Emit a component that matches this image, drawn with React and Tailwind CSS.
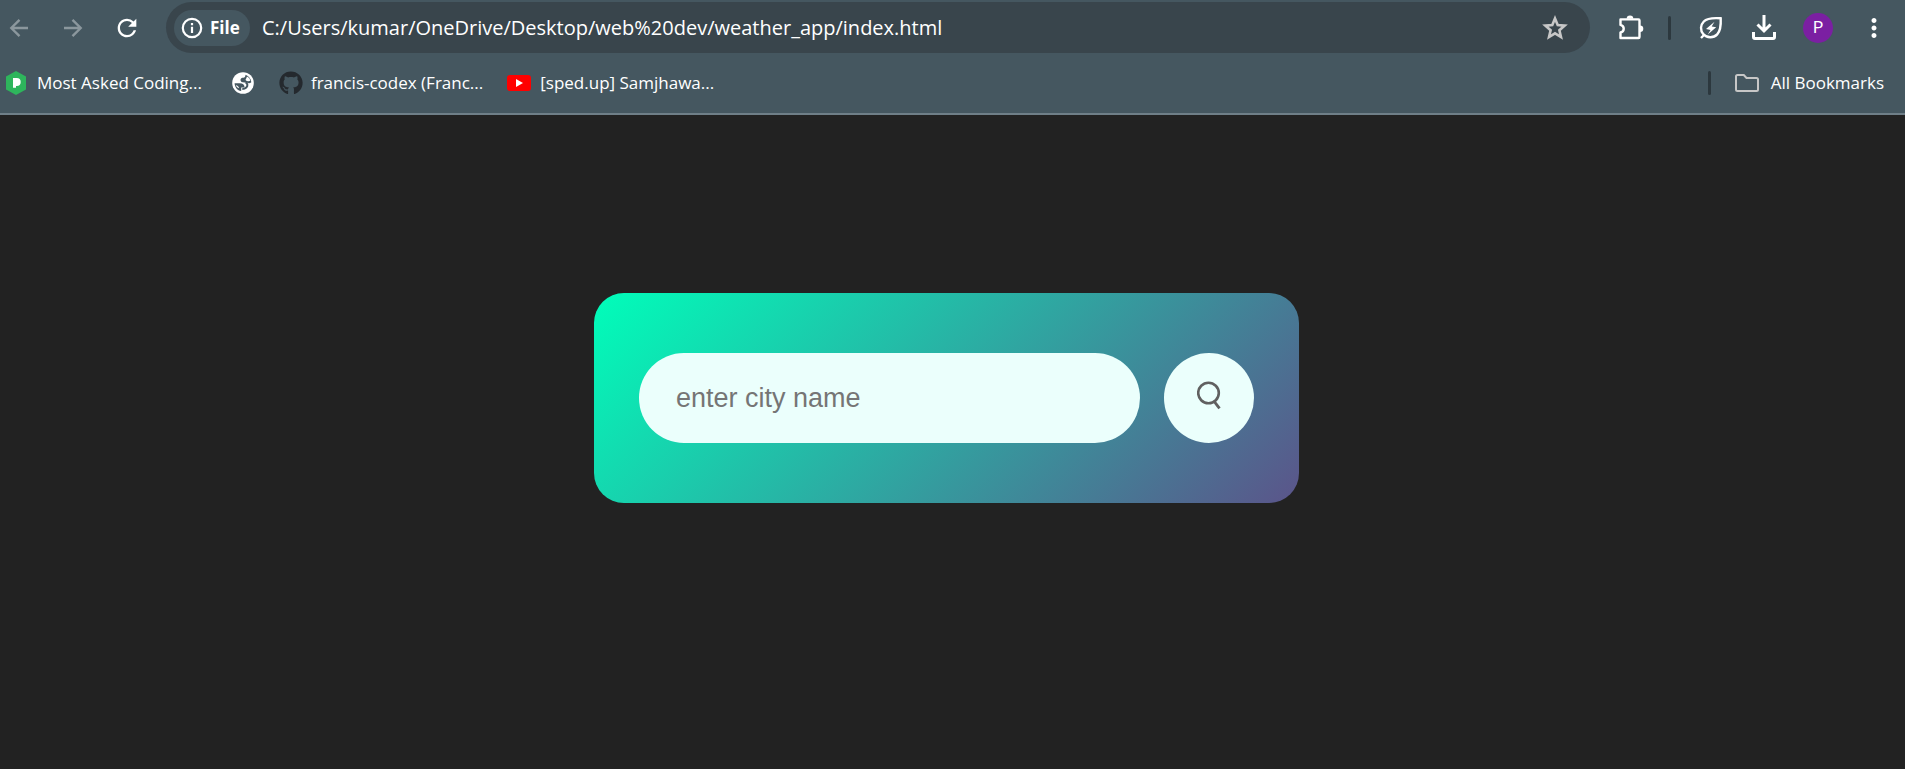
import React from "react";
import { FaGithub } from "react-icons/fa";
import { MdMoreVert, MdRefresh } from "react-icons/md";

function BackIcon({ className = "" }) {
  return (
    <svg className={className} width="20" height="20" viewBox="0 0 20 20" fill="none" stroke="currentColor" strokeWidth="2.400" aria-hidden="true">
      <path d="M19 10H3M10.500 1.800 2.300 10l8.200 8.200" />
    </svg>
  );
}

function InfoIcon() {
  return (
    <svg width="22" height="22" viewBox="0 0 22 22" fill="none" stroke="currentColor" strokeWidth="2.200" aria-hidden="true">
      <circle cx="11" cy="11" r="9.200" />
      <path d="M11 9.800V16M11 6v2.200" />
    </svg>
  );
}

function StarIcon() {
  return (
    <svg width="30" height="30" viewBox="0 0 30 30" fill="none" stroke="currentColor" strokeWidth="2.600" aria-hidden="true">
      <path d="m15 5.500 2.700 6.500 7 .6-5.300 4.600 1.600 6.900-6-3.700-6 3.700 1.600-6.900-5.300-4.600 7-.6z" />
    </svg>
  );
}

function PuzzleIcon() {
  return (
    <svg width="26" height="26" viewBox="0 0 26 26" fill="none" aria-hidden="true">
      <path
        d="M2.500 4.400H20.500a1 1 0 0 1 1 1V22a1 1 0 0 1-1 1H2.500V17.500c4.300-1 4.300-6.600 0-7.600z"
        stroke="currentColor"
        strokeWidth="2.400"
        strokeLinejoin="round"
      />
      <path d="M8.700 3.800a3.300 3.300 0 0 1 6.600 0zM22 10.400a3.300 3.300 0 0 1 0 6.600z" fill="currentColor" />
    </svg>
  );
}

function LeafIcon() {
  return (
    <svg width="24" height="24" viewBox="0 0 24 24" fill="none" stroke="currentColor" aria-hidden="true">
      <path d="M21.700 2.300C14 1.700 8 2.200 4.800 5.500c-3.600 3.600-3.600 9-.6 12.500 3.600 4.200 10.300 4.300 14 .4 3.300-3.500 3.900-8.400 3.500-16.100zM5.500 18.500 2 22" strokeWidth="2.400" />
      <path d="M15.500 5.800 7 13l4.500.9-2.800 4.600 8.500-7.200-4.500-.9z" fill="currentColor" stroke="none" />
    </svg>
  );
}

function DownloadIcon() {
  return (
    <svg width="26" height="26" viewBox="0 0 26 26" fill="none" stroke="currentColor" strokeWidth="3" aria-hidden="true">
      <path d="M13 0v15M6.500 9.500 13 16l6.500-6.500M2.500 17V22a1.500 1.500 0 0 0 1.500 1.500h18a1.500 1.500 0 0 0 1.500-1.500v-5" />
    </svg>
  );
}

function HexIcon() {
  return (
    <svg width="20" height="24" viewBox="0 0 20 24" aria-hidden="true">
      <path d="M10 0 20 5.500v13L10 24 0 18.500v-13z" fill="#2eb55c" />
      <path d="M7 7h3.700a4 4 0 0 1 0 8H10v1.700H7z" fill="#fff" />
    </svg>
  );
}

function GlobeIcon() {
  return (
    <svg width="22" height="22" viewBox="0 0 22 22" aria-hidden="true">
      <circle cx="11" cy="11" r="10.800" fill="#fff" />
      <path
        d="M13.500 2.800C17 4 19 7 19.300 10.200c-1 1-2.300 1.300-3.300.8-1.200-.6-2-.5-3.500-.5-2.500 0-4-.8-4-2.500s1.300-2.300 2.800-2.300c1.400 0 2.200-.9 2.200-2.900z"
        fill="#455760"
      />
      <path d="M2.600 11.200h5c3.200 0 5 1.500 5 4.200H9.200v3.700C5.400 18.400 2.700 15.300 2.600 11.200z" fill="#455760" />
      <path d="M15 4.500c1.800 1 3 2.500 3.300 4.300-2 .8-3.600.4-4.800-.8z" fill="#fff" />
      <path d="M3.800 13.300c1.700.3 3 1.300 3.200 3-1.600-.5-2.700-1.600-3.200-3z" fill="#fff" />
      <path d="M13.500 10.500c2.200.6 2.500 3.300.8 5-1 1-2.500 1.500-4 1.500" fill="none" stroke="#455760" strokeWidth="2" />
    </svg>
  );
}

function YouTubeIcon() {
  return (
    <svg width="24" height="16" viewBox="0 0 24 16" aria-hidden="true">
      <rect width="24" height="16" rx="3" fill="#f00" />
      <path d="m9 4 7 4-7 4z" fill="#fff" />
    </svg>
  );
}

function FolderIcon() {
  return (
    <svg width="24" height="18" viewBox="0 0 24 18" fill="none" stroke="#c7c7c7" strokeWidth="2" aria-hidden="true">
      <path d="M2.500 1h6.300l2.700 3h10A1.500 1.500 0 0 1 23 5.500v10a1.500 1.500 0 0 1-1.500 1.500h-19A1.500 1.500 0 0 1 1 15.500v-13A1.500 1.500 0 0 1 2.500 1z" />
    </svg>
  );
}

function SearchIcon() {
  return (
    <svg width="24" height="30" viewBox="0 0 24 30" fill="none" stroke="#606060" strokeWidth="2.600" aria-hidden="true">
      <circle cx="11.500" cy="12" r="10.300" />
      <path d="m17.500 20.800 5 6.500" strokeWidth="2.800" />
    </svg>
  );
}

function Toolbar() {
  return (
    <div className="flex items-center pt-0.5 pr-4">
      <nav className="flex w-[166px] shrink-0 items-center gap-[34px] pl-[9px]" aria-label="History">
        <button type="button" aria-label="Back" className="text-[#8b979d]"><BackIcon /></button>
        <button type="button" aria-label="Forward" className="text-[#8b979d]"><BackIcon className="rotate-180" /></button>
        <button type="button" aria-label="Reload" className="-mx-1"><MdRefresh size={28} /></button>
      </nav>
      <div className="flex h-[51px] min-w-0 flex-1 items-center rounded-full bg-[#39454c] pr-5 pl-2">
        <button type="button" className="flex h-9 w-[76px] shrink-0 items-center gap-[7px] rounded-full bg-[#455760] pl-[7px] text-[17px] font-bold">
          <InfoIcon />
          File
        </button>
        <input
          type="text"
          aria-label="Address"
          defaultValue="C:/Users/kumar/OneDrive/Desktop/web%20dev/weather_app/index.html"
          className="ml-3 min-w-0 flex-1 bg-transparent text-[20px] outline-none"
        />
        <button type="button" aria-label="Bookmark this page" className="text-[#c7c7c7]"><StarIcon /></button>
      </div>
      <div className="flex shrink-0 items-center pl-7">
        <button type="button" aria-label="Extensions"><PuzzleIcon /></button>
        <div className="mx-6 h-6 w-[3px] rounded-full bg-[#2c383e]" />
        <button type="button" aria-label="Energy saver" className="ml-1"><LeafIcon /></button>
        <button type="button" aria-label="Downloads" className="ml-7"><DownloadIcon /></button>
        <button type="button" aria-label="Profile" className="mx-[26px] size-[30px] rounded-full bg-[#7b1fa2] font-[Roboto,sans-serif] text-base">P</button>
        <button type="button" aria-label="Menu"><MdMoreVert size={30} /></button>
      </div>
    </div>
  );
}

function Bookmarks() {
  return (
    <div className="flex h-[60px] items-center pr-[21px] pl-1.5 text-[17px]">
      <a href="#coding" className="flex items-center gap-[11px]"><HexIcon />Most Asked Coding...</a>
      <a href="#web" aria-label="Web page" className="ml-[30px]"><GlobeIcon /></a>
      <a href="#github" className="ml-[25px] flex items-center gap-2"><FaGithub size={24} color="#24292e" />francis-codex (Franc...</a>
      <a href="#video" className="ml-6 flex items-center gap-[9px]"><YouTubeIcon />[sped.up] Samjhawa...</a>
      <div className="ml-auto h-6 w-[3px] rounded-full bg-[#2c383e]" />
      <button type="button" className="ml-6 flex items-center gap-3"><FolderIcon />All Bookmarks</button>
    </div>
  );
}

export default function App() {
  return (
    <div className="flex min-h-screen flex-col bg-[#222222]">
      <header className="border-b-2 border-[#6f7f88] bg-[#455760] font-['Open_Sans','Noto_Sans',sans-serif] text-white">
        <Toolbar />
        <Bookmarks />
      </header>
      <main className="pt-[178px] pr-3">
        <form
          onSubmit={(e) => e.preventDefault()}
          className="mx-auto flex w-[90%] max-w-[705px] items-center gap-6 rounded-[30px] bg-[linear-gradient(135deg,#00feba,#5b548a)] px-[45px] py-[60px]"
        >
          <input
            type="text"
            aria-label="City"
            placeholder="enter city name"
            className="h-[90px] min-w-0 flex-1 rounded-[45px] bg-[#ebfffc] px-[37px] font-['Liberation_Sans',sans-serif] text-[27px] text-[#555555] outline-none placeholder:text-[#757575]"
          />
          <button type="submit" aria-label="Search" className="flex size-[90px] shrink-0 items-center justify-center rounded-full bg-[#ebfffc] pb-1">
            <SearchIcon />
          </button>
        </form>
      </main>
    </div>
  );
}
